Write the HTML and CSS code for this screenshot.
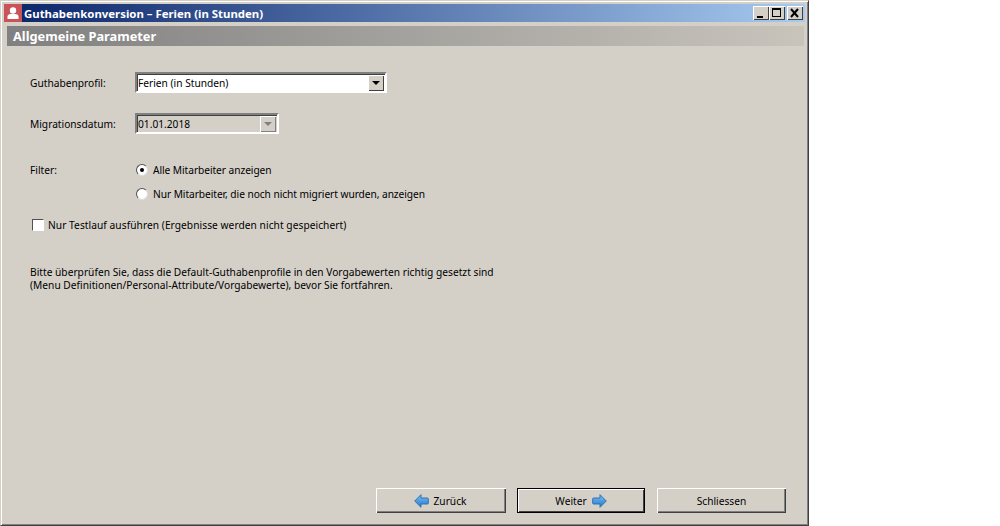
FILE: index.html
```html
<!DOCTYPE html>
<html lang="de">
<head>
<meta charset="utf-8">
<title>Guthabenkonversion</title>
<link rel="stylesheet" href="styles.css">
</head>
<body>
<div class="window">
  <div class="titlebar">
    <span class="app-icon"><svg width="18" height="18" viewBox="0 0 18 18"><rect width="18" height="18" fill="#c8545a"/><circle cx="9" cy="6.500" r="3.200" fill="#fff"/><path d="M3.500 15v-2.500c0-1.500 1.500-2.500 3-2.500h5c1.500 0 3 1 3 2.500V15z" fill="#fff"/></svg></span>
    <span class="title">Guthabenkonversion – Ferien (in Stunden)</span>
    <span class="win-buttons">
      <span class="win-btn"><svg width="16" height="14" viewBox="0 0 16 14"><rect x="4" y="10" width="6" height="2" fill="#000"/></svg></span>
      <span class="win-btn"><svg width="16" height="14" viewBox="0 0 16 14"><path d="M3 2h9v9H3zM4 4v6h7V4z" fill="#000" fill-rule="evenodd"/></svg></span>
      <span class="win-btn close"><svg width="16" height="14" viewBox="0 0 16 14"><path d="M4 3l7 8M11 3l-7 8" stroke="#000" stroke-width="2" fill="none"/></svg></span>
    </span>
  </div>
  <div class="band">Allgemeine Parameter</div>
  <div class="content">
    <div class="row row-profile">
      <label class="label">Guthabenprofil:</label>
      <div class="combo combo-wide"><span class="combo-text">Ferien (in Stunden)</span><span class="arrow"><i class="tri"></i></span></div>
    </div>
    <div class="row row-date">
      <label class="label">Migrationsdatum:</label>
      <div class="combo combo-date"><span class="combo-text">01.01.2018</span><span class="arrow arrow-off"><i class="tri tri-off"></i></span></div>
    </div>
    <div class="row row-filter">
      <label class="label">Filter:</label>
      <span class="radio on"></span><span class="opt">Alle Mitarbeiter anzeigen</span>
    </div>
    <div class="row row-filter2">
      <span class="label"></span>
      <span class="radio"></span><span class="opt">Nur Mitarbeiter, die noch nicht migriert wurden, anzeigen</span>
    </div>
    <div class="row row-check">
      <span class="check"></span><span class="check-text">Nur Testlauf ausführen (Ergebnisse werden nicht gespeichert)</span>
    </div>
    <p class="note">Bitte überprüfen Sie, dass die Default-Guthabenprofile in den Vorgabewerten richtig gesetzt sind<br>(Menu Definitionen/Personal-Attribute/Vorgabewerte), bevor Sie fortfahren.</p>
    <div class="actions">
      <button class="btn btn-back" type="button"><svg width="15" height="14" viewBox="0 0 15 14"><defs><linearGradient id="ab" x1="0" y1="0" x2="0" y2="1"><stop offset="0" stop-color="#7cc0f2"/><stop offset="1" stop-color="#1f78cc"/></linearGradient></defs><path d="M7 .7L.7 7 7 13.300V10h6.500Q14.300 10 14.300 9V5Q14.300 4 13.500 4H7z" fill="url(#ab)" stroke="#2f72b0" stroke-linejoin="round"/></svg>Zurück</button>
      <button class="btn btn-next default" type="button">Weiter<svg width="15" height="14" viewBox="0 0 15 14"><defs><linearGradient id="af" x1="0" y1="0" x2="0" y2="1"><stop offset="0" stop-color="#7cc0f2"/><stop offset="1" stop-color="#1f78cc"/></linearGradient></defs><path d="M8 .7L14.300 7 8 13.300V10H1.500Q.7 10 .7 9V5Q.7 4 1.500 4H8z" fill="url(#af)" stroke="#2f72b0" stroke-linejoin="round"/></svg></button>
      <button class="btn btn-close" type="button">Schliessen</button>
    </div>
  </div>
</div>
</body>
</html>
```
FILE: styles.css
```css
html, body { margin: 0; padding: 0; background: #fff; }
body { height: 526px; overflow: hidden; font-family: "Noto Sans", sans-serif; font-size: 10.2px; color: #000; }
.window {
  width: 809px; height: 526px; box-sizing: border-box;
  background: #d4d0c8;
  border-style: solid; border-width: 1px;
  border-color: #d4d0c8 #404040 #404040 #d4d0c8;
  box-shadow: inset 1px 1px 0 #fff, inset -1px -1px 0 #808080;
  padding: 3px 3px 0 3px;
  display: flex; flex-direction: column;
}
.titlebar {
  height: 18px; flex: none; display: flex; align-items: center;
  background: linear-gradient(to right, #0a246a, #a6caf0);
  color: #fff; font-weight: 700; font-size: 11.4px;
}
.app-icon { display: flex; width: 18px; height: 18px; margin-right: 2px; }
.title { flex: 1; white-space: nowrap; }
.win-buttons { display: flex; margin-right: 2px; }
.win-btn {
  display: block; width: 16px; height: 14px; background: #d4d0c8;
  box-shadow: inset 1px 1px 0 #fff, inset -1px -1px 0 #404040;
}
.win-btn svg { display: block; }
.win-btn.close { margin-left: 2px; }
.band {
  flex: none; height: 20px; line-height: 20px; margin: 4px 1px 0 3px; padding-left: 6px;
  background: linear-gradient(to right, #808080, #c8c4bc);
  color: #fff; font-weight: 700; font-size: 12.8px;
}
.content { flex: 1; padding: 0 19px 12px 26px; display: flex; flex-direction: column; }
.row { display: flex; align-items: center; }
.label { width: 105px; flex: none; }
.row-profile { margin-top: 26px; }
.row-date { margin-top: 20px; }
.row-filter { margin-top: 28px; height: 16px; }
.row-filter2 { margin-top: 8px; height: 16px; }
.row-check { margin-top: 15px; height: 16px; padding-left: 2px; }
.combo {
  height: 21px; box-sizing: border-box; display: flex; align-items: center;
  border: 2px solid; border-color: #808080 #fff #fff #808080;
  box-shadow: inset 1px 1px 0 #404040;
  padding: 1px;
}
.combo-wide { width: 252px; background: #fff; }
.combo-date { width: 144px; background: #d4d0c8; }
.combo-text { flex: 1; }
.arrow {
  width: 16px; height: 16px; flex: none; background: #d4d0c8; display: flex; align-items: center; justify-content: center;
  box-shadow: inset 1px 1px 0 #fff, inset -1px -1px 0 #404040;
}
.arrow-off { box-shadow: inset 1px 1px 0 #fff, inset -1px -1px 0 #808080; }
.tri { width: 0; height: 0; border-style: solid; border-width: 4px 4px 0; border-color: #000 transparent transparent; }
.tri-off { border-top-color: #808080; }
.radio {
  width: 12px; height: 12px; flex: none; box-sizing: border-box; border-radius: 50%; background: #fff;
  border: 1px solid; border-color: #505050 #dcdcdc #dcdcdc #505050; margin: 0 5px 0 1px;
  display: flex; align-items: center; justify-content: center;
}
.radio.on::after { content: ""; width: 4px; height: 4px; border-radius: 50%; background: #000; }
.opt { letter-spacing: -0.06px; }
.check {
  width: 12px; height: 12px; flex: none; box-sizing: border-box; background: #fff;
  border: 1px solid #505050; border-right-color: #fff; border-bottom-color: #fff; margin-right: 4px;
}
.check-text { letter-spacing: 0.05px; }
.note { margin: 33px 0 0; line-height: 13px; letter-spacing: 0.01px; }
.actions { margin-top: auto; display: flex; justify-content: flex-end; }
.btn {
  height: 25px; box-sizing: border-box; display: flex; align-items: center; justify-content: center; gap: 5px;
  font: inherit; color: #000; background: #d4d0c8; padding: 0;
  border: none; box-shadow: inset 1px 1px 0 #fff, inset -1px -1px 0 #404040, inset -2px -2px 0 #808080;
}
.btn-back { width: 130px; padding-right: 2px; }
.btn-next { width: 128px; margin-left: 11px; }
.btn-close { width: 129px; margin-left: 12px; }
.default { outline: 1px solid #000; outline-offset: -1px; box-shadow: inset 2px 2px 0 #fff, inset -2px -2px 0 #404040; }
```
